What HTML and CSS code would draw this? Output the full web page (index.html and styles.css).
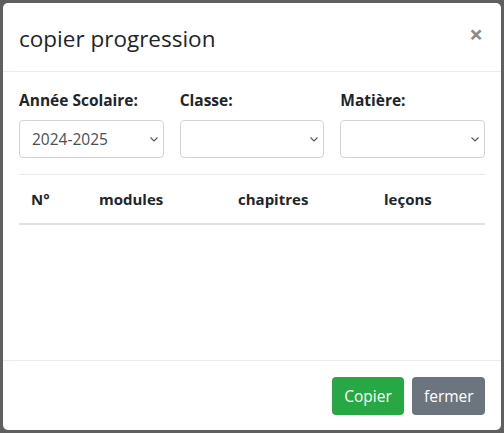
FILE: index.html
```html
<!DOCTYPE html>
<html>
<head>
    <title>copier progression</title>
    <link rel="stylesheet" href="styles.css">
</head>
<body>
    <div class="modal">
        <div class="modal-header">
            <h5 class="modal-title">copier progression</h5>
            <button type="button" class="close">&times;</button>
        </div>
        <div class="modal-body">
            <div class="filters">
                <div class="form-group">
                    <label for="annee">Année Scolaire:</label>
                    <div class="select-wrap">
                        <select id="annee">
                            <option>2024-2025</option>
                        </select>
                        <svg class="chevron" width="8" height="5" viewBox="0 0 8 5"><path d="M0.5 0.5 L4 4 L7.5 0.5" fill="none" stroke="#555" stroke-width="1.1"/></svg>
                    </div>
                </div>
                <div class="form-group">
                    <label for="classe">Classe:</label>
                    <div class="select-wrap">
                        <select id="classe"></select>
                        <svg class="chevron" width="8" height="5" viewBox="0 0 8 5"><path d="M0.5 0.5 L4 4 L7.5 0.5" fill="none" stroke="#555" stroke-width="1.1"/></svg>
                    </div>
                </div>
                <div class="form-group">
                    <label for="matiere">Matière:</label>
                    <div class="select-wrap">
                        <select id="matiere"></select>
                        <svg class="chevron" width="8" height="5" viewBox="0 0 8 5"><path d="M0.5 0.5 L4 4 L7.5 0.5" fill="none" stroke="#555" stroke-width="1.1"/></svg>
                    </div>
                </div>
            </div>
            <hr>
            <table class="table">
                <thead>
                    <tr>
                        <th class="col-num">N°</th>
                        <th class="col-mod">modules</th>
                        <th class="col-chap">chapitres</th>
                        <th>leçons</th>
                    </tr>
                </thead>
                <tbody></tbody>
            </table>
        </div>
        <div class="modal-footer">
            <button type="button" class="btn btn-success">Copier</button>
            <button type="button" class="btn btn-secondary">fermer</button>
        </div>
    </div>
</body>
</html>
```

FILE: styles.css
```css
* {
    margin: 0;
    padding: 0;
    box-sizing: border-box;
    font-family: 'Open Sans', sans-serif;
}

html, body {
    height: 100%;
}

body {
    background-color: #5f5f5f;
    padding: 3px;
}

.modal {
    background: #fff;
    border-radius: 5px;
    height: 427px;
    display: flex;
    flex-direction: column;
}

.modal-header {
    display: flex;
    align-items: center;
    justify-content: space-between;
    height: 69px;
    padding: 0 16px;
    border-bottom: 1px solid #e9ecef;
}

.modal-title {
    font-size: 22.5px;
    font-weight: 400;
    color: #212529;
    margin-top: 2px;
}

.close {
    background: none;
    border: none;
    font-size: 24px;
    font-weight: 700;
    line-height: 1;
    color: #8a8a8a;
    margin-right: 2px;
    margin-top: -6px;
    cursor: pointer;
}

.modal-body {
    flex: 1;
    padding: 16px;
}

.filters {
    display: grid;
    grid-template-columns: repeat(3, 1fr);
    column-gap: 16px;
}

.form-group label {
    display: block;
    font-size: 15.5px;
    font-weight: 700;
    color: #212529;
    margin-top: 1px;
    margin-bottom: 9px;
}

.select-wrap {
    position: relative;
}

.select-wrap select {
    -webkit-appearance: none;
    appearance: none;
    width: 100%;
    height: 38px;
    padding: 0 24px 0 12px;
    border: 1px solid #ced4da;
    border-radius: 4px;
    background: #fff;
    color: #495057;
    font-size: 15.5px;
}

.chevron {
    position: absolute;
    right: 6px;
    top: 17px;
}

hr {
    border: none;
    border-top: 1px solid #e9ecef;
    margin-top: 16px;
}

.table {
    width: 100%;
    border-collapse: collapse;
}

.table th {
    text-align: left;
    font-size: 15px;
    font-weight: 700;
    color: #212529;
    padding: 12px;
    height: 49px;
    border-bottom: 2px solid #dee2e6;
}

.col-num {
    width: 68px;
}

.col-mod {
    width: 139px;
}

.col-chap {
    width: 146px;
}

.modal-footer {
    display: flex;
    justify-content: flex-end;
    gap: 8px;
    padding: 16px 16px 15px;
    border-top: 1px solid #e9ecef;
}

.btn {
    border: none;
    border-radius: 4px;
    color: #fff;
    font-size: 15.5px;
    height: 38px;
    padding: 0 12px;
    cursor: pointer;
}

.btn-success {
    background: #28a745;
    width: 72px;
}

.btn-secondary {
    background: #6c757d;
    width: 73px;
}
```
